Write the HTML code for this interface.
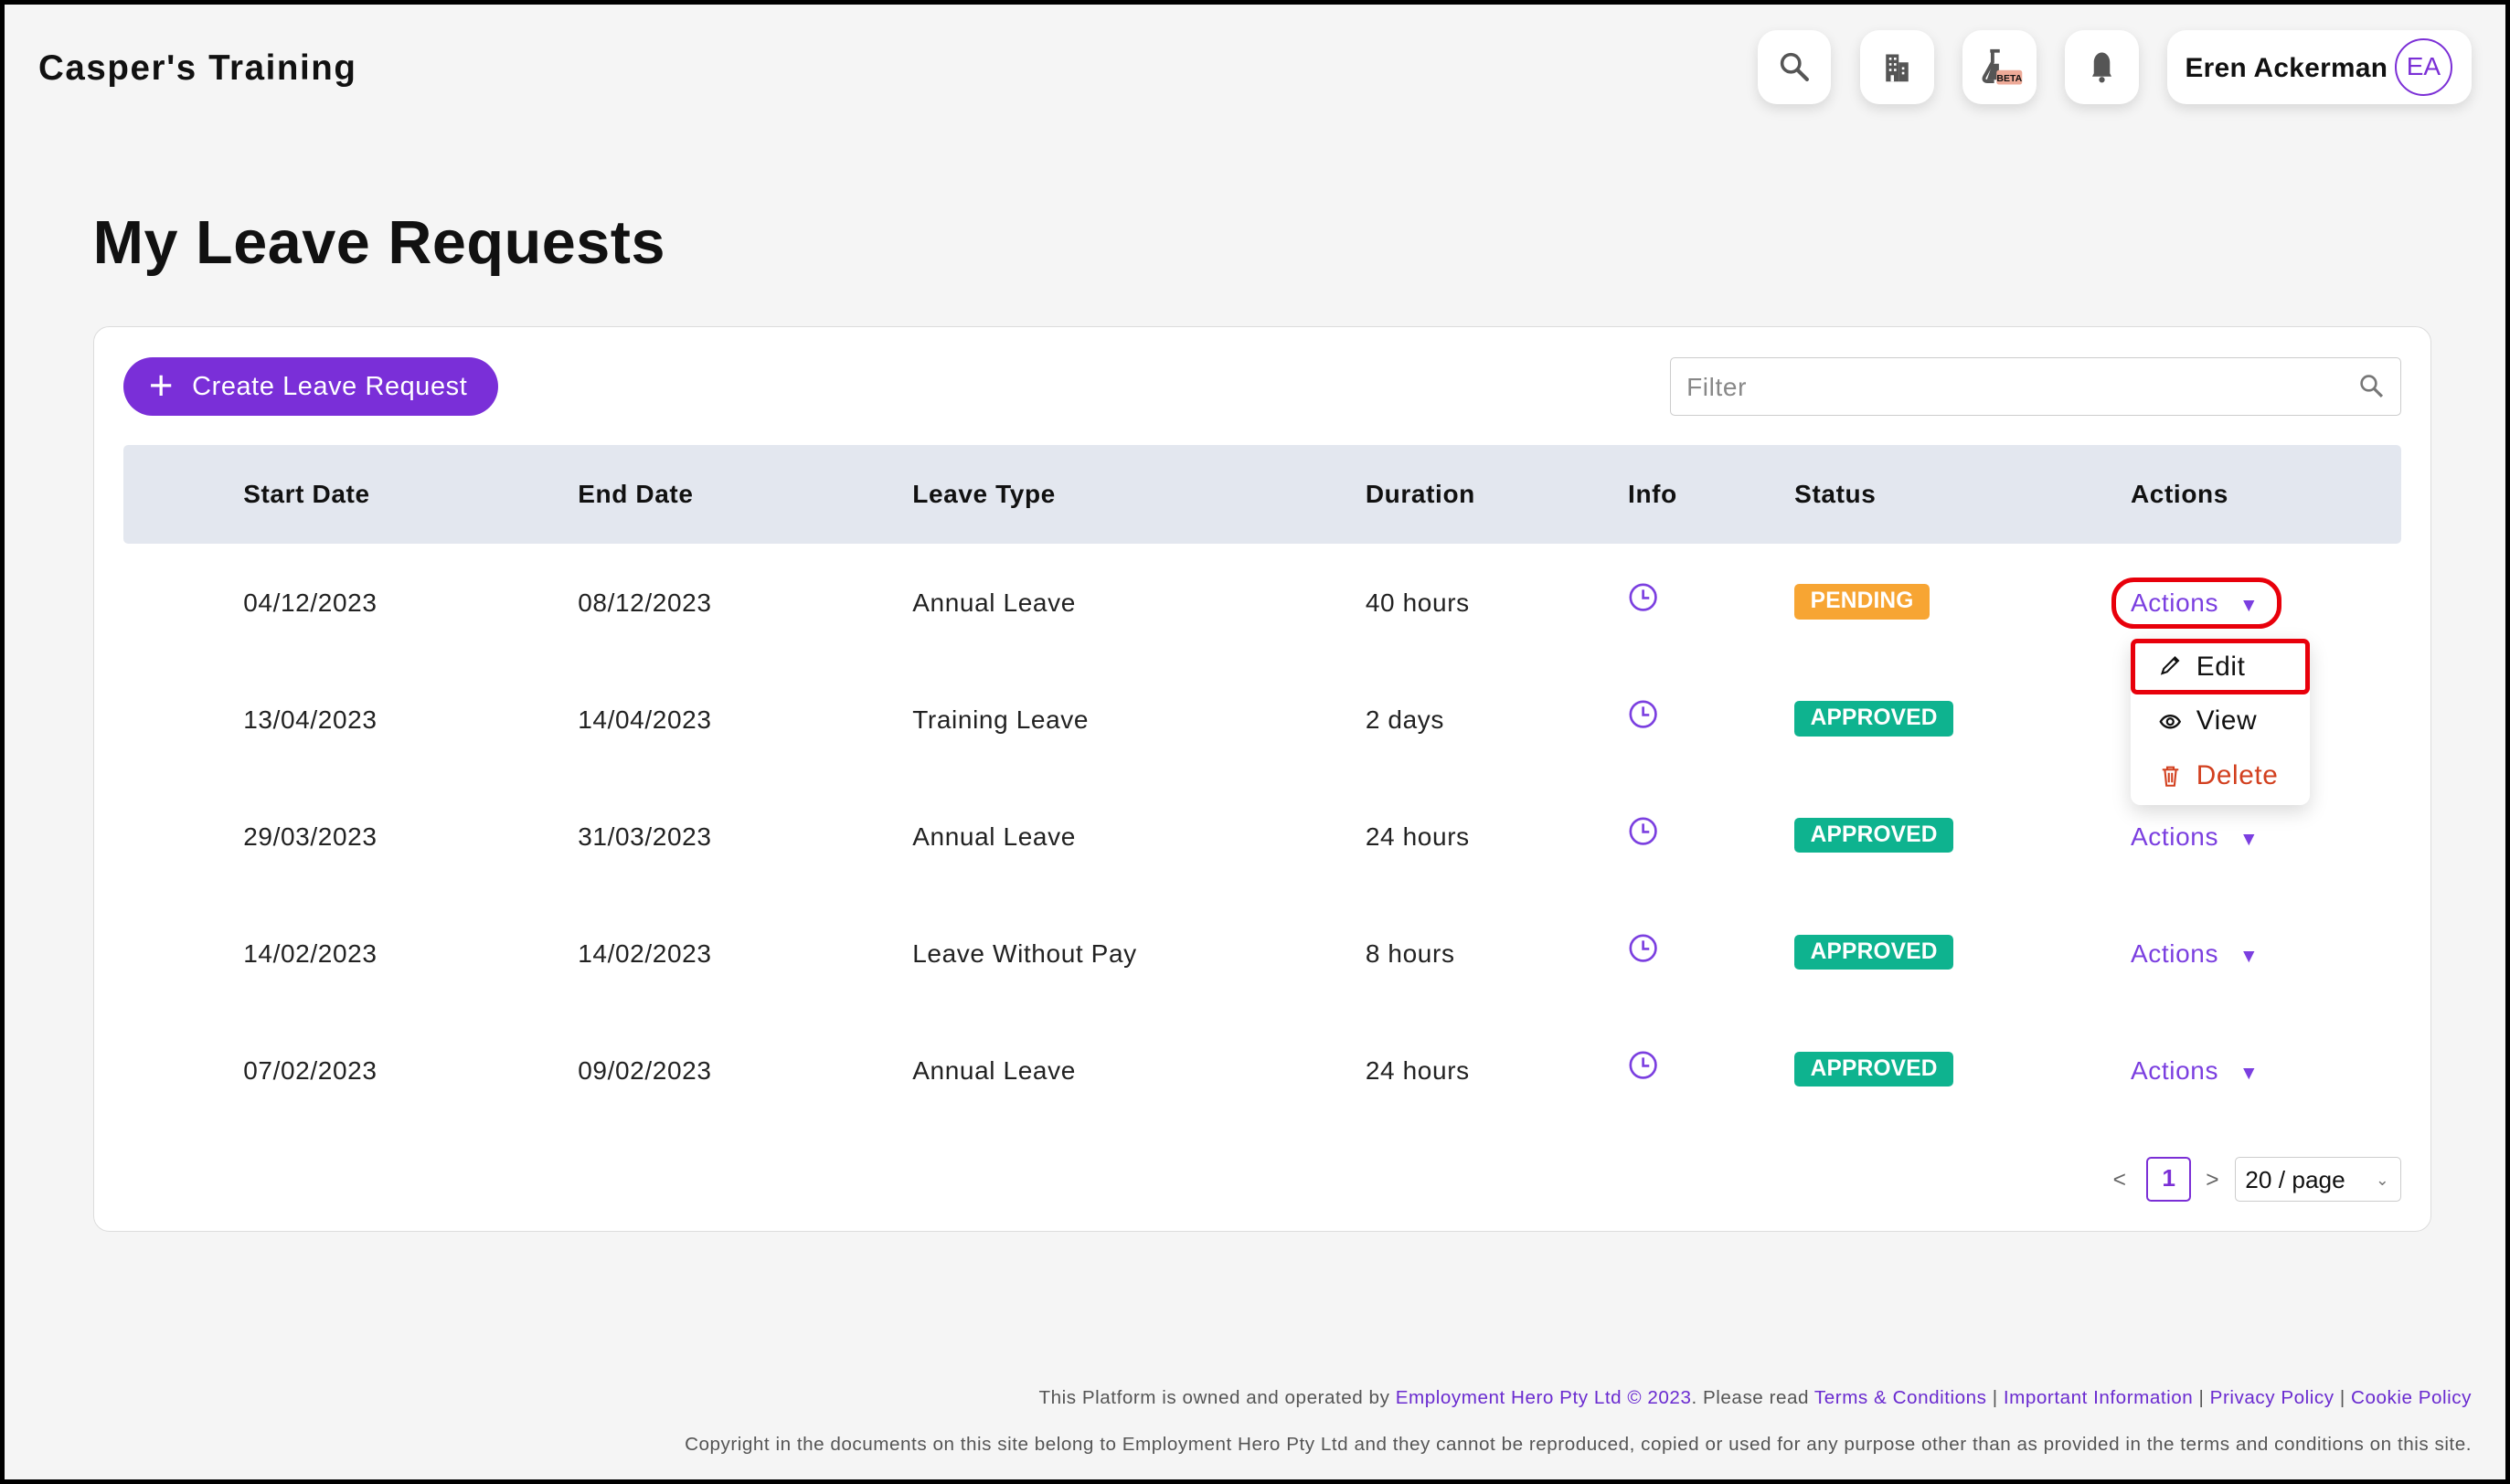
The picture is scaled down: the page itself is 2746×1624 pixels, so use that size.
<!DOCTYPE html>
<html><head><meta charset="utf-8"><style>
*{box-sizing:border-box;margin:0;padding:0}
html,body{width:2746px;height:1624px;overflow:hidden;background:#000}
#z{zoom:1.75128;width:1568px;height:927.4px;position:relative;font-family:"Liberation Sans",sans-serif;color:#111;letter-spacing:.35px}
#p{position:absolute;left:3px;top:3px;right:3px;bottom:3px;background:#f5f5f5}
.a{position:absolute}
.ib{position:absolute;top:16px;width:46px;height:46px;background:#fff;border-radius:12px;box-shadow:0 3px 8px rgba(0,0,0,.12);display:flex;align-items:center;justify-content:center}
.card{left:55px;top:201px;width:1461px;height:566px;background:#fff;border:1px solid #dcdcdc;border-radius:10px}
.th{font-weight:bold;font-size:16px;top:297px}
.td{font-size:16px;color:#222}
.badge{font-size:14px;font-weight:bold;color:#fff;border-radius:3px;padding:3px 10px;letter-spacing:.1px}
.act{color:#7b3fe0;font-size:16px}
.f{font-size:11.8px;color:#555;right:21px;white-space:nowrap;letter-spacing:.3px}
.f b{font-weight:normal;color:#6a2bd0}
</style></head><body><div id="z"><div id="p">
<div class="a" style="left:21px;top:27px;font-size:22px;font-weight:bold;letter-spacing:.9px">Casper's Training</div>
<div class="ib" style="left:1095px"><svg width="22" height="22" viewBox="0 0 24 24"><circle cx="9.5" cy="9.5" r="6" fill="none" stroke="#555" stroke-width="2.2"/><path d="M14 14l6.5 6.5" stroke="#555" stroke-width="2.6" stroke-linecap="round"/></svg></div>
<div class="ib" style="left:1159px"><svg width="20" height="20" viewBox="0 0 20 20"><rect x="3" y="2" width="8" height="17" fill="#555"/><rect x="11" y="7" width="6" height="12" fill="#555"/><g fill="#fff"><rect x="5" y="4" width="1.5" height="1.5"/><rect x="8" y="4" width="1.5" height="1.5"/><rect x="5" y="7.5" width="1.5" height="1.5"/><rect x="8" y="7.5" width="1.5" height="1.5"/><rect x="5" y="11" width="1.5" height="1.5"/><rect x="8" y="11" width="1.5" height="1.5"/><rect x="13" y="10" width="1.5" height="1.5"/><rect x="13" y="13" width="1.5" height="1.5"/><rect x="6" y="15" width="2" height="4"/></g></svg></div>
<div class="ib" style="left:1223px"><svg width="34" height="30" viewBox="0 0 34 30"><path d="M11 5h6M12.5 5v7l-5 9c-1 2 0 3 2 3h4" fill="none" stroke="#555" stroke-width="2.2"/><path d="M12.5 13h4v10H9z" fill="#555"/><rect x="15" y="17" width="16" height="9" rx="1.5" fill="#eeaa98"/><text x="23" y="24" font-size="6" font-weight="bold" text-anchor="middle" font-family="Liberation Sans" fill="#111" letter-spacing="0">BETA</text></svg></div>
<div class="ib" style="left:1287px"><svg width="20" height="22" viewBox="0 0 20 22"><path d="M10 2c-3 0-5 3-5 6v7l-1 2h12l-1-2V8c0-3-2-6-5-6z" fill="#555"/><circle cx="10" cy="19" r="1.8" fill="#555"/></svg></div>
<div class="a" style="left:1351px;top:16px;width:190px;height:46px;background:#fff;border-radius:12px;box-shadow:0 3px 8px rgba(0,0,0,.12)"><span class="a" style="left:11px;top:14px;font-size:17px;font-weight:bold;letter-spacing:.2px">Eren Ackerman</span><div class="a" style="left:142px;top:5px;width:36px;height:36px;border:1.5px solid #7b2fd6;border-radius:50%;color:#7b2fd6;font-size:16px;text-align:center;line-height:33px;letter-spacing:0">EA</div></div>
<div class="a" style="left:55px;top:127px;font-size:38px;font-weight:bold;letter-spacing:.3px">My Leave Requests</div>
<div class="a card"></div>
<div class="a" style="left:74px;top:220px;width:234px;height:37px;background:#7a2fd8;border-radius:19px;color:#fff;font-size:16.5px;line-height:37px;padding-left:43px">Create Leave Request<span class="a" style="left:16px;top:0;font-size:26px;font-weight:200;line-height:35px">+</span></div>
<div class="a" style="left:1040px;top:220px;width:457px;height:37px;border:1px solid #ccc;border-radius:3px;font-size:16px;color:#888;line-height:37px;padding-left:10px">Filter<svg class="a" style="right:9px;top:9px" width="18" height="18" viewBox="0 0 24 24"><circle cx="9.5" cy="9.5" r="6" fill="none" stroke="#777" stroke-width="2"/><path d="M14 14l6.5 6.5" stroke="#777" stroke-width="2.4"/></svg></div>
<div class="a" style="left:74px;top:275px;width:1423px;height:62px;background:#e3e7ef;border-radius:3px"></div>
<div class="a th" style="left:149px">Start Date</div><div class="a th" style="left:358px">End Date</div><div class="a th" style="left:567px">Leave Type</div><div class="a th" style="left:850px">Duration</div><div class="a th" style="left:1014px">Info</div><div class="a th" style="left:1118px">Status</div><div class="a th" style="left:1328px">Actions</div>
<div id="rows"></div>
<div class="a" style="left:1316px;top:358px;width:106px;height:32px;border:3px solid #e8000b;border-radius:14px"></div>
<div class="a" style="left:1328px;top:396px;width:112px;height:104px;background:#fff;border-radius:6px;box-shadow:0 4px 12px rgba(0,0,0,.15)"></div>
<div class="a" style="left:1328px;top:396px;width:112px;height:35px;border:3px solid #e8000b;border-radius:4px"></div>
<svg class="a" style="left:1346px;top:406px" width="14" height="14" viewBox="0 0 14 14"><path d="M2 12l1-3 7-7 2 2-7 7z M9.5 3l2 2" fill="none" stroke="#111" stroke-width="1.2"/></svg>
<div class="a" style="left:1369px;top:404px;font-size:17px">Edit</div>
<svg class="a" style="left:1346px;top:443px" width="14" height="10" viewBox="0 0 14 10"><path d="M1 5c3-5 9-5 12 0c-3 5-9 5-12 0z" fill="none" stroke="#111" stroke-width="1.3"/><circle cx="7" cy="5" r="2" fill="none" stroke="#111" stroke-width="1.3"/></svg>
<div class="a" style="left:1369px;top:438px;font-size:17px">View</div>
<svg class="a" style="left:1347px;top:475px" width="12" height="14" viewBox="0 0 12 14"><path d="M1 3h10M4 3V1.5h4V3M2.5 3l1 10h5l1-10M5 5v6M7 5v6" fill="none" stroke="#d2401f" stroke-width="1.2"/></svg>
<div class="a" style="left:1369px;top:472px;font-size:17px;color:#d2401f">Delete</div>
<div class="a" style="left:1317px;top:727px;font-size:14px;color:#666">&lt;</div>
<div class="a" style="left:1338px;top:720px;width:28px;height:28px;border:1.5px solid #7b2fd6;border-radius:3px;color:#7b2fd6;text-align:center;line-height:25px;font-size:15px;font-weight:bold">1</div>
<div class="a" style="left:1375px;top:727px;font-size:14px;color:#666">&gt;</div>
<div class="a" style="left:1393px;top:720px;width:104px;height:28px;border:1px solid #ccc;border-radius:3px;font-size:15px;line-height:28px;padding-left:6px;letter-spacing:0">20 / page<span class="a" style="right:7px;top:0;font-size:10px;color:#777">&#8964;</span></div>
<div class="a f" style="top:864px">This Platform is owned and operated by <b>Employment Hero Pty Ltd © 2023</b>. Please read <b>Terms &amp; Conditions</b> | <b>Important Information</b> | <b>Privacy Policy</b> | <b>Cookie Policy</b></div>
<div class="a f" style="top:893px">Copyright in the documents on this site belong to Employment Hero Pty Ltd and they cannot be reproduced, copied or used for any purpose other than as provided in the terms and conditions on this site.</div>
</div></div>
<script>
var d=[["04/12/2023","08/12/2023","Annual Leave","40 hours","PENDING"],["13/04/2023","14/04/2023","Training Leave","2 days","APPROVED"],["29/03/2023","31/03/2023","Annual Leave","24 hours","APPROVED"],["14/02/2023","14/02/2023","Leave Without Pay","8 hours","APPROVED"],["07/02/2023","09/02/2023","Annual Leave","24 hours","APPROVED"]];
var h="";d.forEach(function(r,i){var y=365+i*73;
h+='<div class="a td" style="left:149px;top:'+y+'px">'+r[0]+'</div><div class="a td" style="left:358px;top:'+y+'px">'+r[1]+'</div><div class="a td" style="left:567px;top:'+y+'px">'+r[2]+'</div><div class="a td" style="left:850px;top:'+y+'px">'+r[3]+'</div>';
h+='<svg class="a" style="left:1014px;top:'+(y-4)+'px" width="19" height="19" viewBox="0 0 20 20"><circle cx="10" cy="10" r="8.3" fill="none" stroke="#7b3fe0" stroke-width="1.6"/><path d="M10 5v5.5h4" fill="none" stroke="#7b3fe0" stroke-width="1.6"/></svg>';
h+='<div class="a badge" style="left:1118px;top:'+(y-3)+'px;background:'+(r[4]=="PENDING"?"#f7a533":"#0eb38f")+'">'+r[4]+'</div>';
if(i!=1)h+='<div class="a act" style="left:1328px;top:'+y+'px">Actions<span style="font-size:12px;margin-left:13px">&#9660;</span></div>';});
document.getElementById("rows").innerHTML=h;
</script>
</body></html>
